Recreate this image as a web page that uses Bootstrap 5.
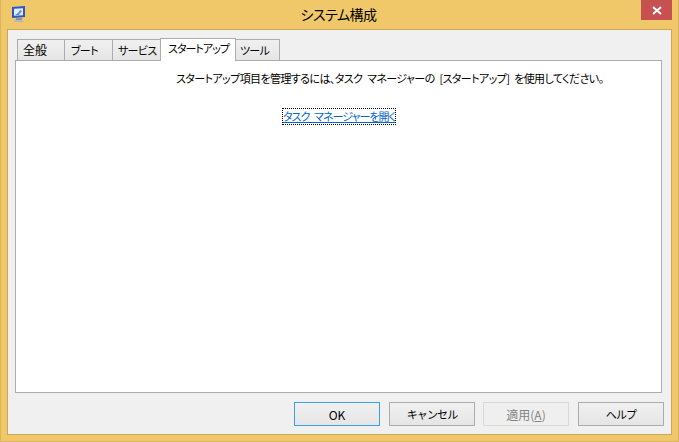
<!DOCTYPE html>
<html lang="ja">
<head>
<meta charset="utf-8">
<title>システム構成</title>
<link rel="stylesheet" href="https://cdn.jsdelivr.net/npm/bootstrap@5.3.0/dist/css/bootstrap.min.css">
<style>
html,body{height:442px;overflow:hidden}
body{background:#f0c86a;width:679px;font-family:"Noto Sans CJK JP","Liberation Sans",sans-serif;font-size:12px;color:#000;border-left:1px solid #d9b560;border-right:1px solid #d9b560;border-bottom:1px solid #d9b560;font-feature-settings:"palt"}
.win-shell{height:441px}
.title-bar{height:29px;padding-right:6px}
.title-side{flex:1 1 0;min-width:0}
.win-icon{margin-left:10px;margin-top:6px}
.win-title{font-size:14px;line-height:29px;letter-spacing:-.5px;transform:translateX(2px)}
.win-close{width:31px;height:20px;background:#c75050;border:0;padding:0;border-radius:0;display:flex;align-items:center;justify-content:center}
.win-close:hover{background:#c75050}
.client{margin:0 6px 6px 6px;background:#f0f0f0;border:1px solid #c9a85c;padding:7px 9px 0 7px;flex:1 1 0;min-height:0}
.tab-strip{height:23px;flex-wrap:nowrap;border:0;padding-left:2px;align-items:flex-end;margin:0}
.tab-item{height:21px;margin-right:0}
.tab-btn.nav-link{display:block;box-sizing:border-box;height:21px;width:48px;padding:0 0 0 6px;text-align:left;font-size:11px;letter-spacing:-.7px;line-height:20px;color:#000;background:linear-gradient(#f0f0f0,#e5e5e5);border:1px solid #acacac;border-bottom:0;border-left-width:0;border-radius:0;margin:0;white-space:nowrap}
.tab-first.nav-link{border-left-width:1px;font-size:12px;letter-spacing:0;padding-left:5px}
.tab-mid.nav-link{padding-left:5px}
.tab-item-on{height:23px;position:relative;z-index:2;margin-left:-1px;margin-bottom:-1px}
.tab-btn.nav-link.active{height:23px;width:76px;background:#fff;border:1px solid #acacac;border-bottom:0;padding-left:7px;letter-spacing:-.95px;line-height:19px;color:#000;margin:0}
.tab-last.nav-link{width:44px;padding-left:4px}
.tab-body{background:#fff;border:1px solid #acacac;height:333px;padding-top:8px}
.intro-text{margin:0;padding-left:160px;line-height:18px;font-size:11px;letter-spacing:-.6px;word-spacing:3px;white-space:nowrap}
.manager-row{margin-top:21px;padding-left:267px;line-height:15px}
.manager-link{display:inline-block;outline:1px dotted #000;color:#0066cc;font-size:11px;letter-spacing:-.95px;word-spacing:3px;text-decoration:underline;white-space:nowrap}
.action-row{margin-top:9px;width:649px}
.win-btn.btn{width:86px;height:24px;padding:0;font-size:12px;line-height:21px;color:#000;background:linear-gradient(#f0f0f0,#e5e5e5);border:1px solid #acacac;border-radius:0;opacity:1}
.win-btn.btn-kana{font-size:11px;letter-spacing:-.9px}
.win-btn.btn-ok{border-color:#3c9fe8;margin-right:1px}
.win-btn.btn-apply{margin-right:1px}
.win-btn.btn:disabled{background:#efefef;border-color:#d9d9d9;color:#838383}
</style>
</head>
<body>
<div class="win-shell d-flex flex-column">
  <div class="title-bar d-flex align-items-start">
    <div class="title-side">
      <svg class="win-icon d-block" width="15" height="17" viewBox="0 0 15 17">
        <path d="M3 14h8l2 2H4z" fill="#b4b8bd"/>
        <rect x="1" y="1" width="13" height="11" fill="#2b55c8" transform="skewY(-4)"/>
        <rect x="3" y="3" width="9" height="7" fill="#dfeefa" transform="skewY(-4)"/>
        <path d="M4 9l3-2 2-3 2 1-3 4z" fill="#5c8fe0"/>
        <rect x="5" y="12" width="6" height="2" fill="#8d949c"/>
      </svg>
    </div>
    <div class="win-title">システム構成</div>
    <div class="title-side d-flex justify-content-end">
      <button class="win-close btn" type="button" aria-label="閉じる">
        <svg width="10" height="9" viewBox="0 0 10 9"><path d="M1 1l8 7M9 1L1 8" stroke="#fff" stroke-width="2" fill="none"/></svg>
      </button>
    </div>
  </div>
  <div class="client d-flex flex-column">
    <ul class="nav nav-tabs tab-strip">
      <li class="nav-item tab-item"><a class="nav-link tab-btn tab-first" href="#">全般</a></li>
      <li class="nav-item tab-item"><a class="nav-link tab-btn" href="#">ブート</a></li>
      <li class="nav-item tab-item"><a class="nav-link tab-btn tab-mid" href="#">サービス</a></li>
      <li class="nav-item tab-item-on"><a class="nav-link tab-btn active" href="#">スタートアップ</a></li>
      <li class="nav-item tab-item"><a class="nav-link tab-btn tab-last" href="#">ツール</a></li>
    </ul>
    <div class="tab-body">
      <p class="intro-text">スタートアップ項目を管理するには、タスク マネージャーの [スタートアップ] を使用してください。</p>
      <div class="manager-row"><a class="manager-link" href="#">タスク マネージャーを開く</a></div>
    </div>
    <div class="action-row d-flex justify-content-end gap-2">
      <button class="btn win-btn btn-ok" type="button">OK</button>
      <button class="btn win-btn btn-kana" type="button">キャンセル</button>
      <button class="btn win-btn btn-apply" type="button" disabled>適用(<u>A</u>)</button>
      <button class="btn win-btn btn-kana" type="button">ヘルプ</button>
    </div>
  </div>
</div>
</body>
</html>
